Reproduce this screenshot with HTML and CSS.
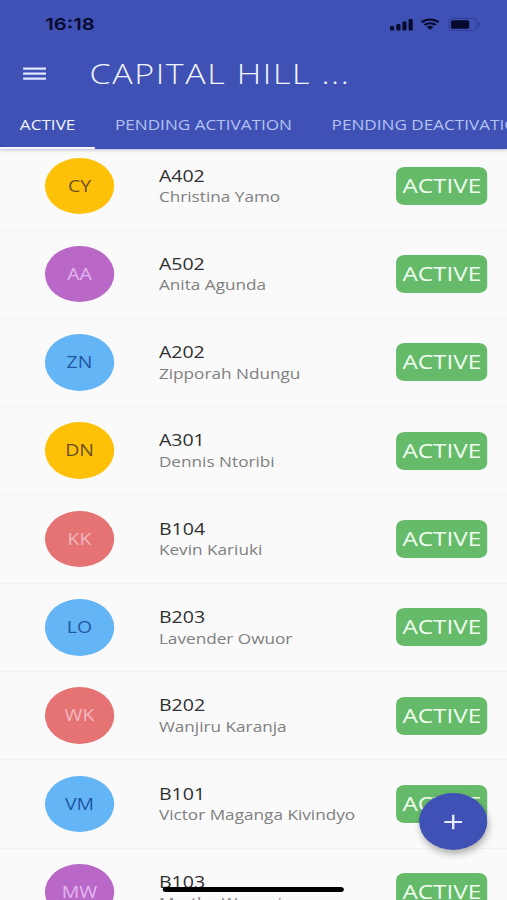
FILE: index.html
```html
<!DOCTYPE html>
<html lang="en">
<head>
<meta charset="utf-8">
<title>Capital Hill</title>
<link rel="stylesheet" href="styles.css">
</head>
<body>
<div class="app">
  <header class="header">
    <div class="status">
      <span class="time">16:18</span>
      <svg class="signal" width="19" height="13" viewBox="0 0 19 13" preserveAspectRatio="none"><rect x="0" y="8" width="3.400" height="4.500" rx="1"/><rect x="5.200" y="6" width="3.400" height="6.500" rx="1"/><rect x="10.200" y="3.400" width="3.400" height="9.100" rx="1"/><rect x="15.300" y="1" width="3.400" height="11.500" rx="1"/></svg>
      <svg class="wifi" width="16" height="12" viewBox="0 0 16 12"><path d="M1 4.400a10 10 0 0 1 14 0M3.400 7a6.600 6.600 0 0 1 9.200 0" fill="none" stroke="currentColor" stroke-width="2"/><path d="M8 11.700 5.200 9a4 4 0 0 1 5.600 0z"/></svg>
      <svg class="battery" width="27" height="13" viewBox="0 0 27 13"><rect x=".6" y=".6" width="22.800" height="11.800" rx="3" fill="none" stroke="#2f3e9a"/><rect x="2.200" y="2.200" width="15" height="8.600" rx="1.600"/><path d="M24.700 4.200v4.600c1-.4 1.600-1.300 1.600-2.300s-.6-1.900-1.600-2.300z" fill="#2f3e9a"/></svg>
    </div>
    <div class="bar">
      <svg class="menu" width="19" height="14" viewBox="0 0 19 14"><path d="M0 1.700h19M0 6.700h19M0 11.700h19" stroke="#dfe6ff" stroke-width="2.300"/></svg>
      <h1 class="title">CAPITAL HILL ...</h1>
    </div>
    <nav class="tabs">
      <span class="tab current">ACTIVE</span>
      <span class="tab">PENDING ACTIVATION</span>
      <span class="tab">PENDING DEACTIVATION</span>
    </nav>
  </header>
  <main class="list">
    <div class="row"><div class="avatar amber">CY</div><div class="info"><b>A402</b><span>Christina Yamo</span></div><div class="badge">ACTIVE</div></div>
    <div class="row"><div class="avatar purple">AA</div><div class="info"><b>A502</b><span>Anita Agunda</span></div><div class="badge">ACTIVE</div></div>
    <div class="row"><div class="avatar blue">ZN</div><div class="info"><b>A202</b><span>Zipporah Ndungu</span></div><div class="badge">ACTIVE</div></div>
    <div class="row"><div class="avatar amber">DN</div><div class="info"><b>A301</b><span>Dennis Ntoribi</span></div><div class="badge">ACTIVE</div></div>
    <div class="row"><div class="avatar red">KK</div><div class="info"><b>B104</b><span>Kevin Kariuki</span></div><div class="badge">ACTIVE</div></div>
    <div class="row"><div class="avatar blue">LO</div><div class="info"><b>B203</b><span>Lavender Owuor</span></div><div class="badge">ACTIVE</div></div>
    <div class="row"><div class="avatar red">WK</div><div class="info"><b>B202</b><span>Wanjiru Karanja</span></div><div class="badge">ACTIVE</div></div>
    <div class="row"><div class="avatar blue">VM</div><div class="info"><b>B101</b><span>Victor Maganga Kivindyo</span></div><div class="badge">ACTIVE</div></div>
    <div class="row"><div class="avatar purple">MW</div><div class="info"><b>B103</b><span>Martha Wangui</span></div><div class="badge">ACTIVE</div></div>
  </main>
  <div class="fab"><svg width="16" height="16" viewBox="0 0 16 16"><path d="M8 .7v14.600M.7 8h14.600" stroke="#e4eaff" stroke-width="2"/></svg></div>
  <div class="home"></div>
</div>
</body>
</html>
```
FILE: styles.css
```css
* { box-sizing: border-box; }
body {
  margin: 0;
  height: 900px;
  overflow: hidden;
  background: #fafafa;
}
.app {
  position: relative;
  width: 418px;
  height: 900px;
  overflow: hidden;
  transform: scaleX(1.215);
  transform-origin: 0 0;
  background: #fafafa;
  font-family: "Open Sans", sans-serif;
}
.header {
  position: relative;
  z-index: 1;
  height: 149.4px;
  background: #3f51b5;
  box-shadow: 0 1px 3px rgba(40, 50, 120, .3);
}
.status {
  display: flex;
  align-items: center;
  height: 48px;
  padding-left: 37.3px;
  color: #060a2c;
  fill: currentColor;
}
.time {
  width: 283.7px;
  font: 600 16.6px/20px Inter, sans-serif;
}
.wifi { margin-left: 6px; }
.battery { margin-left: 7px; }
.bar {
  display: flex;
  align-items: center;
  height: 51px;
  padding-left: 19px;
}
.title {
  margin: -2px 0 0 35.7px;
  font-size: 28px;
  font-weight: 300;
  line-height: 40px;
  letter-spacing: 1.3px;
  color: #f2f5ff;
  white-space: nowrap;
}
.tabs {
  display: flex;
  height: 50px;
}
.tab {
  flex: none;
  padding: 0 16.3px;
  font-size: 14.1px;
  font-weight: 400;
  line-height: 52px;
  color: #b5c1f2;
  white-space: nowrap;
}
.tab.current {
  color: #f1f4ff;
  border-bottom: 2.5px solid #f7f5ff;
}
.list { margin-top: -7.2px; }
.row {
  display: flex;
  align-items: center;
  height: 88.3px;
  padding: 0 16.7px 0 37.1px;
  border-bottom: 1px solid #f3f3f3;
}
.avatar {
  width: 56.7px;
  height: 56.5px;
  border-radius: 50%;
  font-size: 16px;
  line-height: 57px;
  text-align: center;
}
.amber { background: #ffc107; color: #6b4f20; }
.purple { background: #ba68c8; color: #e3b5f0; }
.blue { background: #64b5f6; color: #1f57a5; }
.red { background: #e57373; color: #f3b6c0; }
.info {
  flex: 1;
  margin-left: 37px;
  padding-top: 1.4px;
  display: flex;
  flex-direction: column;
}
.info b {
  font-size: 16.1px;
  font-weight: 400;
  line-height: 21.5px;
  color: #303030;
}
.info span {
  font-size: 14.15px;
  line-height: 20.5px;
  color: #808080;
}
.badge {
  width: 75.3px;
  height: 38px;
  border-radius: 7px;
  background: #66bb6a;
  color: #f0fff0;
  font-size: 20px;
  line-height: 38px;
  text-align: center;
}
.fab {
  position: absolute;
  left: 344.5px;
  top: 793.3px;
  display: flex;
  align-items: center;
  justify-content: center;
  width: 56.6px;
  height: 56.6px;
  border-radius: 50%;
  background: #3f51b5;
  box-shadow: 1px 4px 7px rgba(0, 0, 0, .3);
}
.home {
  position: absolute;
  left: 134px;
  top: 887px;
  width: 149px;
  height: 5px;
  border-radius: 3px;
  background: #000;
}
```
